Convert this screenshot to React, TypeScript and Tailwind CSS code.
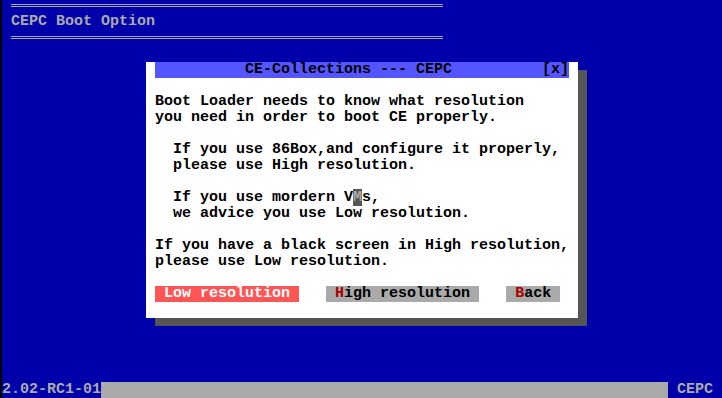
const BLUE = 'bg-[#0000AA]';

function DoubleLine() {
  return (
    <div className="h-[16px]">
      <div className="ml-[9px] mt-[6px] h-[3px] w-[432px] border-y border-[#AAAAAA]" />
    </div>
  );
}

function Row({ children }: { children?: React.ReactNode }) {
  return <div className="h-[16px] whitespace-pre pl-[9px]">{children}</div>;
}

function Button({ label, hot, active }: { label: string; hot?: boolean; active?: boolean }) {
  if (active) {
    return <span className="bg-[#FF5555] text-white whitespace-pre">{` ${label} `}</span>;
  }
  return (
    <span className="bg-[#AAAAAA] text-black whitespace-pre">
      {' '}
      {hot ? <span className="text-[#AA0000]">{label[0]}</span> : label[0]}
      {label.slice(1)}{' '}
    </span>
  );
}

export default function App() {
  return (
    <div className="w-[722px] h-[398px] bg-black overflow-hidden">
      <div
        className={`ml-[2px] -mt-[2px] w-[720px] h-[400px] ${BLUE} flex flex-col font-['Liberation_Mono',monospace] font-bold text-[15px] leading-[16px] text-[#AAAAAA]`}
      >
        <DoubleLine />
        <div className="h-[16px] whitespace-pre pl-[9px]">CEPC Boot Option</div>
        <DoubleLine />
        <div className="h-[16px]" />

        {/* dialog */}
        <div className="ml-[144px] w-[432px] h-[256px] bg-white text-black shadow-[9px_8px_0_#555555]">
          <div className="mx-[9px] h-[16px] bg-[#5555FF] whitespace-pre">
            {'          CE-Collections --- CEPC          [x]'}
          </div>
          <Row />
          <Row>Boot Loader needs to know what resolution</Row>
          <Row>you need in order to boot CE properly.</Row>
          <Row />
          <Row>{'  If you use 86Box,and configure it properly,'}</Row>
          <Row>{'  please use High resolution.'}</Row>
          <Row />
          <Row>
            {'  If you use mordern V'}
            <span className="bg-[#555555] text-[#AAAAAA]">M</span>
            {'s,'}
          </Row>
          <Row>{'  we advice you use Low resolution.'}</Row>
          <Row />
          <Row>If you have a black screen in High resolution,</Row>
          <Row>please use Low resolution.</Row>
          <Row />
          <div className="h-[16px] pl-[9px] flex gap-[27px]">
            <Button label="Low resolution" active />
            <Button label="High resolution" hot />
            <Button label="Back" hot />
          </div>
        </div>

        {/* status bar */}
        <div className="mt-auto h-[16px] flex whitespace-pre">
          <span>2.02-RC1-01</span>
          <div className="flex-1 bg-[#AAAAAA]" />
          <span>{' CEPC '}</span>
        </div>
      </div>
    </div>
  );
}
